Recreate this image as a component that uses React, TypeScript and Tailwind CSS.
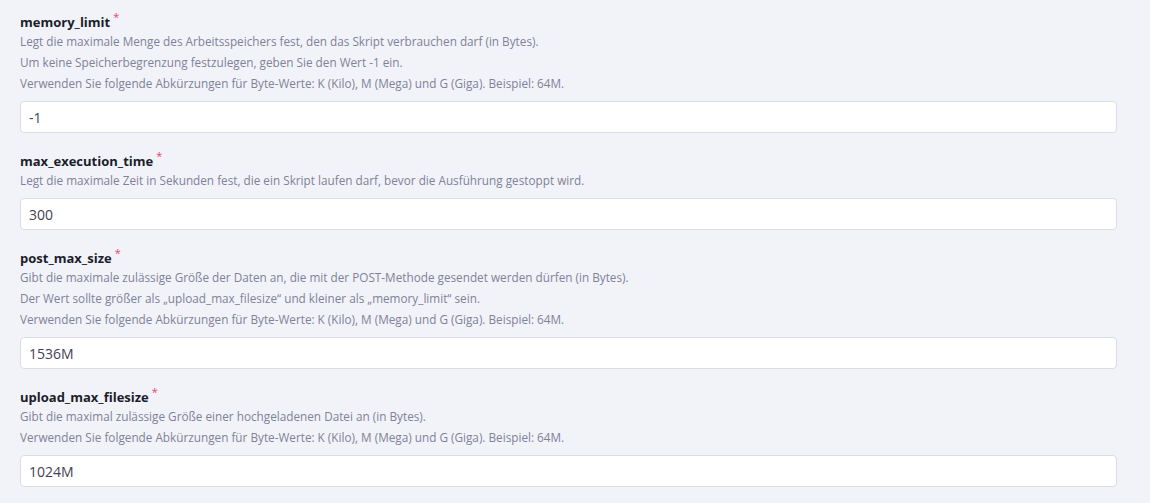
import React from 'react';

type Field = {
  name: string;
  lines: string[];
  value: string;
};

const fields: Field[] = [
  {
    name: 'memory_limit',
    lines: [
      'Legt die maximale Menge des Arbeitsspeichers fest, den das Skript verbrauchen darf (in Bytes).',
      'Um keine Speicherbegrenzung festzulegen, geben Sie den Wert -1 ein.',
      'Verwenden Sie folgende Abkürzungen für Byte-Werte: K (Kilo), M (Mega) und G (Giga). Beispiel: 64M.',
    ],
    value: '-1',
  },
  {
    name: 'max_execution_time',
    lines: ['Legt die maximale Zeit in Sekunden fest, die ein Skript laufen darf, bevor die Ausführung gestoppt wird.'],
    value: '300',
  },
  {
    name: 'post_max_size',
    lines: [
      'Gibt die maximale zulässige Größe der Daten an, die mit der POST-Methode gesendet werden dürfen (in Bytes).',
      'Der Wert sollte größer als „upload_max_filesize“ und kleiner als „memory_limit“ sein.',
      'Verwenden Sie folgende Abkürzungen für Byte-Werte: K (Kilo), M (Mega) und G (Giga). Beispiel: 64M.',
    ],
    value: '1536M',
  },
  {
    name: 'upload_max_filesize',
    lines: [
      'Gibt die maximal zulässige Größe einer hochgeladenen Datei an (in Bytes).',
      'Verwenden Sie folgende Abkürzungen für Byte-Werte: K (Kilo), M (Mega) und G (Giga). Beispiel: 64M.',
    ],
    value: '1024M',
  },
];

export default function App() {
  return (
    <div className="min-h-screen bg-[#f2f3f8] pl-5 pr-[33px] pt-[14px] font-['Open_Sans',sans-serif] antialiased">
      <div className="flex flex-col gap-5">
        {fields.map((f) => (
          <div key={f.name} className="flex flex-col">
            <label className="text-[13px] leading-[17px] font-bold text-[#1c1d2b]">
              {f.name}
              <span className="relative -top-[6px] ml-[3px] text-[11px] font-normal text-[#f1416c]">*</span>
            </label>
            <div className="text-[11.75px] leading-[21px] text-[#7e8299]">
              {f.lines.map((l, i) => (
                <div key={i}>{l}</div>
              ))}
            </div>
            <input
              type="text"
              defaultValue={f.value}
              className="mt-[7px] h-8 w-full rounded border border-[#dcdde3] bg-white px-2 text-[14px] text-[#3f4254] focus:outline-none"
            />
          </div>
        ))}
      </div>
    </div>
  );
}
